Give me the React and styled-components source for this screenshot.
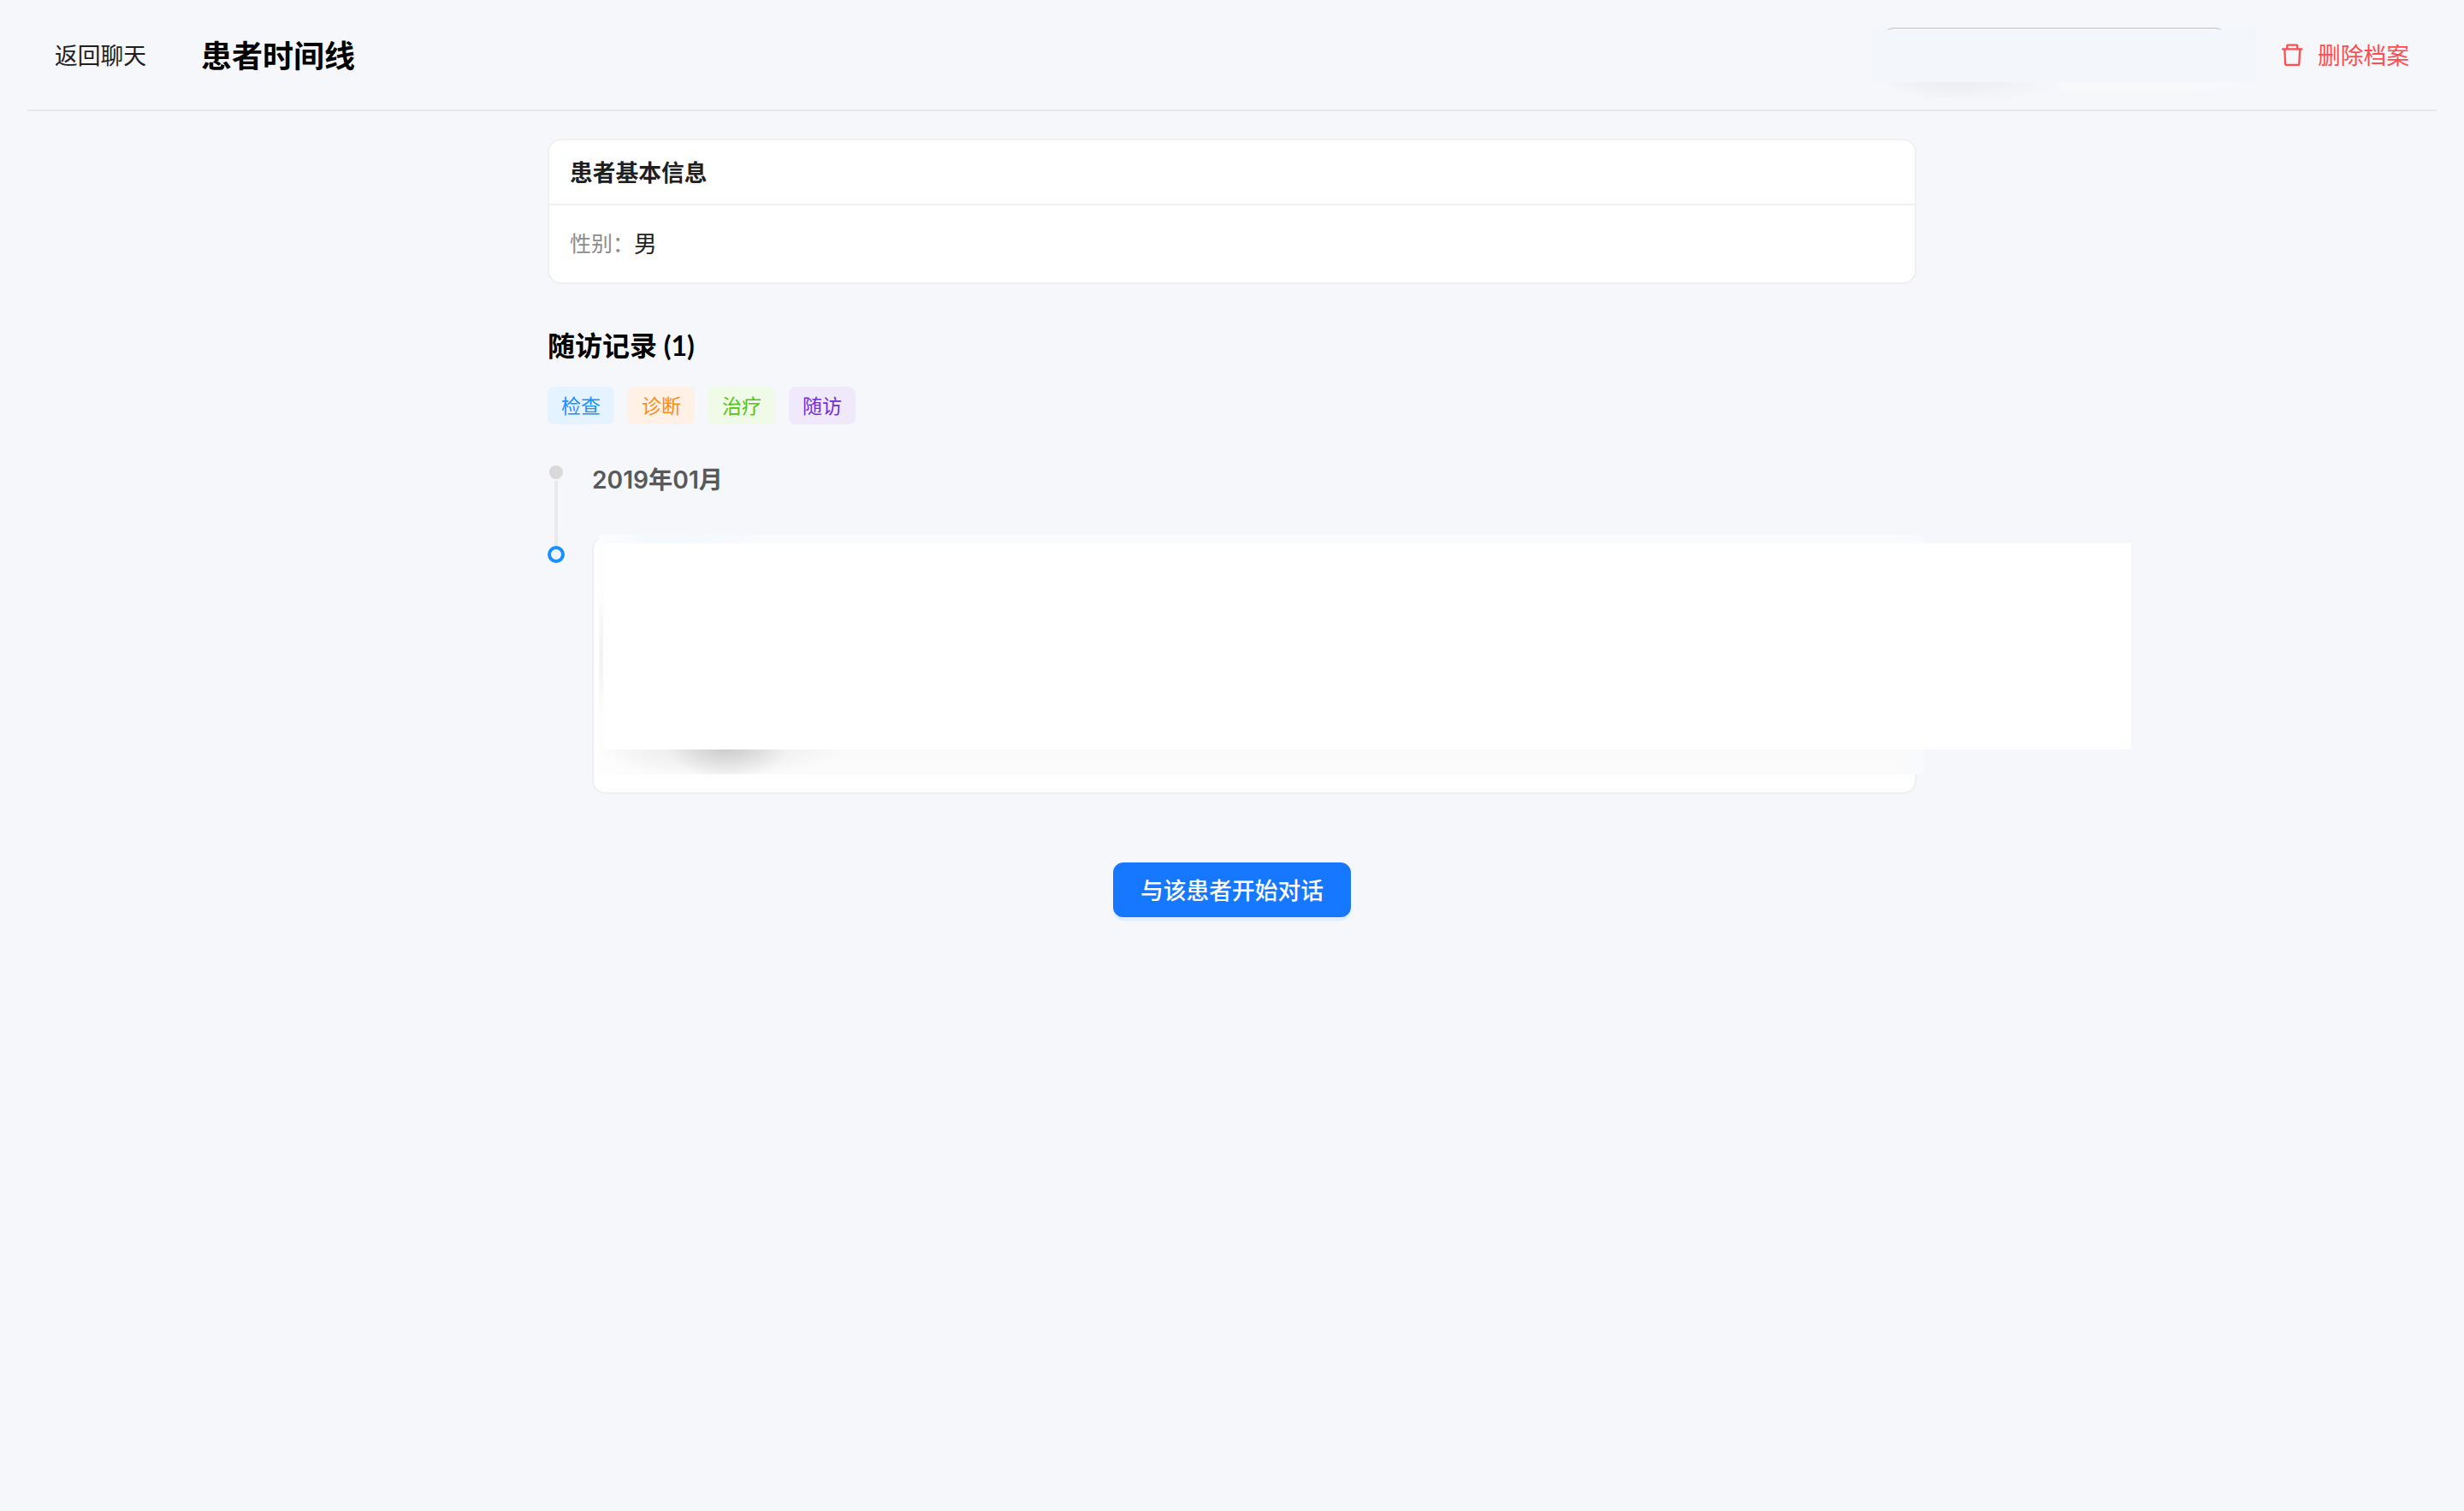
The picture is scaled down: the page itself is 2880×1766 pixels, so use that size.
import React from 'react'
import styled, { createGlobalStyle } from 'styled-components'
import { AiOutlineDelete } from 'react-icons/ai'

const GlobalStyle = createGlobalStyle `
    * {
        box-sizing: border-box;
    }
    body {
        margin: 0;
        background-color: #f5f7fb;
        color: #1f1f1f;
        font-family: "Noto Sans CJK SC", sans-serif;
        font-size: 26.75px;
    }
    button {
        border: none;
        background: none;
        padding: 0;
        color: inherit;
        font: inherit;
        cursor: pointer;
    }
`
const Page = styled.div `
    min-height: 1766px;
    padding: 0 32px;
    overflow: hidden;
`
const Header = styled.header `
    display: flex;
    align-items: center;
    justify-content: space-between;
    height: 130px;
    padding: 0 32px;
    border-bottom: 2px solid #e8e8e8;
`
const HeaderSide = styled.div `
    display: flex;
    align-items: center;
    gap: ${props => props.$gap}px;
`
const BackButton = styled.button `
    line-height: 40px;
`
const Title = styled.h1 `
    margin: 0;
    padding-bottom: 2px;
    color: #000;
    font-size: 36px;
    font-weight: 700;
    line-height: 48px;
`
const PatientSelect = styled.div `
    position: relative;
    width: 400px;
    height: 64px;
    border: 2px solid #d9d9d9;
    border-radius: 12px;
    background-color: white;
`
const SelectMask = styled.div `
    position: absolute;
    top: 1px;
    left: -14px;
    width: 446px;
    height: 61px;
    background-color: #f3f7fc;

    &::before {
        content: '';
        position: absolute;
        top: 61px;
        left: 0;
        width: 446px;
        height: 21px;
        background:
            radial-gradient(ellipse 75px 20px at 80px 0, rgba(232, 233, 234, 0.4), transparent),
            radial-gradient(ellipse 110px 21px at 120px 0, #eff0f2 20%, transparent),
            radial-gradient(ellipse 150px 16px at 300px 0, #f8f9fa 60%, transparent),
            #f5f7fb;
    }
`
const DeleteButton = styled.button `
    display: flex;
    align-items: center;
    gap: 13px;
    color: #ff4d4f;
    line-height: 40px;
`
const Content = styled.main `
    width: 1600px;
    margin: 32px auto 0;
`
const Card = styled.section `
    border: 2px solid #f0f0f0;
    border-radius: 16px;
    background-color: white;
`
const CardHead = styled.div `
    display: flex;
    align-items: center;
    height: 76px;
    padding: 0 24px 2px;
    border-bottom: 2px solid #f0f0f0;
    font-weight: 700;
`
const CardBody = styled.div `
    display: flex;
    align-items: center;
    height: 90px;
    padding: 0 24px 4px;
`
const Label = styled.span `
    color: #8c8c8c;
    font-size: 25px;
`
const SectionTitle = styled.h2 `
    margin: 48px 0 0;
    color: #000;
    font-family: Lato, "Noto Sans CJK SC", sans-serif;
    font-size: 32px;
    font-weight: 700;
    line-height: 48px;
`
const Tags = styled.div `
    display: flex;
    gap: 16px;
    margin-top: 24px;
`
const Tag = styled.span `
    width: 78px;
    height: 44px;
    border-radius: 8px;
    background-color: ${props => props.$bg};
    color: ${props => props.$color};
    font-size: 23px;
    line-height: 42px;
    text-align: center;
`
const Timeline = styled.div `
    display: grid;
    grid-template-columns: 20px 1fr;
    column-gap: 32px;
    margin-top: 46px;
`
const Rail = styled.div `
    display: flex;
    flex-direction: column;
    align-items: center;
    padding-top: 2px;
`
const Dot = styled.div `
    width: 16px;
    height: 16px;
    border-radius: 50%;
    background-color: #d9d9d9;
`
const Line = styled.div `
    width: 4px;
    height: 76px;
    margin-top: 2px;
    background-color: #e8eaed;
`
const Ring = styled.div `
    width: 20px;
    height: 20px;
    border: 4px solid #1890ff;
    border-radius: 50%;
`
const Month = styled.div `
    height: 84px;
    color: #595959;
    font-family: Inter, "Noto Sans CJK SC", sans-serif;
    font-size: 28.2px;
    font-weight: 600;
    line-height: 38px;
`
const RecordCard = styled(Card) `
    position: relative;
    height: 302px;
`
/* the record is hidden: a frosted layer with an opaque sheet on top */
const Frost = styled.div `
    position: absolute;
    top: -3px;
    left: 6px;
    width: 1550px;
    height: 280px;
    background:
        radial-gradient(ellipse 72px 40px at 150px 246px, rgba(150, 150, 150, 0.38), transparent),
        radial-gradient(ellipse 145px 36px at 140px 248px, rgba(215, 215, 215, 0.5), transparent),
        radial-gradient(ellipse 9px 75px at 4px 140px, #f1f1f1, transparent),
        radial-gradient(ellipse 110px 20px at 90px 10px, #f3f8fe, transparent),
        linear-gradient(to right, rgba(254, 254, 254, 0.8), transparent 60px),
        linear-gradient(to right, transparent 1515px, #f7f9fc 1550px),
        linear-gradient(#f8fafc, #fafbfc 12px, #fdfdfe 60px, #fdfdfd 200px, #f9f9f9 250px, #fbfbfb);
`
const Sheet = styled.div `
    position: absolute;
    top: 7px;
    left: 11px;
    width: 1786px;
    height: 241px;
    background-color: white;
`
const StartButton = styled.button `
    display: block;
    width: 278px;
    height: 64px;
    margin: 80px auto 0;
    border-radius: 12px;
    background-color: #1677ff;
    box-shadow: 0 4px 0 #deecfb;
    color: white;
    font-weight: 500;
    line-height: 64px;
`

const tags = [
    {name: "检查", bg: "#e4f3ff", color: "#1890ff"},
    {name: "诊断", bg: "#fff1e6", color: "#fa8c16"},
    {name: "治疗", bg: "#effbe7", color: "#52c41a"},
    {name: "随访", bg: "#f0e9fb", color: "#722ed1"},
]

export default function App(){
    return(
        <Page>
            <GlobalStyle />
            <Header>
                <HeaderSide $gap={64}>
                    <BackButton>返回聊天</BackButton>
                    <Title>患者时间线</Title>
                </HeaderSide>
                <HeaderSide $gap={62}>
                    <PatientSelect><SelectMask /></PatientSelect>
                    <DeleteButton><AiOutlineDelete size={32.5} /> 删除档案</DeleteButton>
                </HeaderSide>
            </Header>
            <Content>
                <Card>
                    <CardHead>患者基本信息</CardHead>
                    <CardBody><Label>性别：</Label>男</CardBody>
                </Card>
                <SectionTitle>随访记录 (1)</SectionTitle>
                <Tags>
                    {tags.map(tag => <Tag key={tag.name} $bg={tag.bg} $color={tag.color}>{tag.name}</Tag>)}
                </Tags>
                <Timeline>
                    <Rail>
                        <Dot />
                        <Line />
                        <Ring />
                    </Rail>
                    <div>
                        <Month>2019年01月</Month>
                        <RecordCard>
                            <Frost />
                            <Sheet />
                        </RecordCard>
                    </div>
                </Timeline>
                <StartButton>与该患者开始对话</StartButton>
            </Content>
        </Page>
    )
}
